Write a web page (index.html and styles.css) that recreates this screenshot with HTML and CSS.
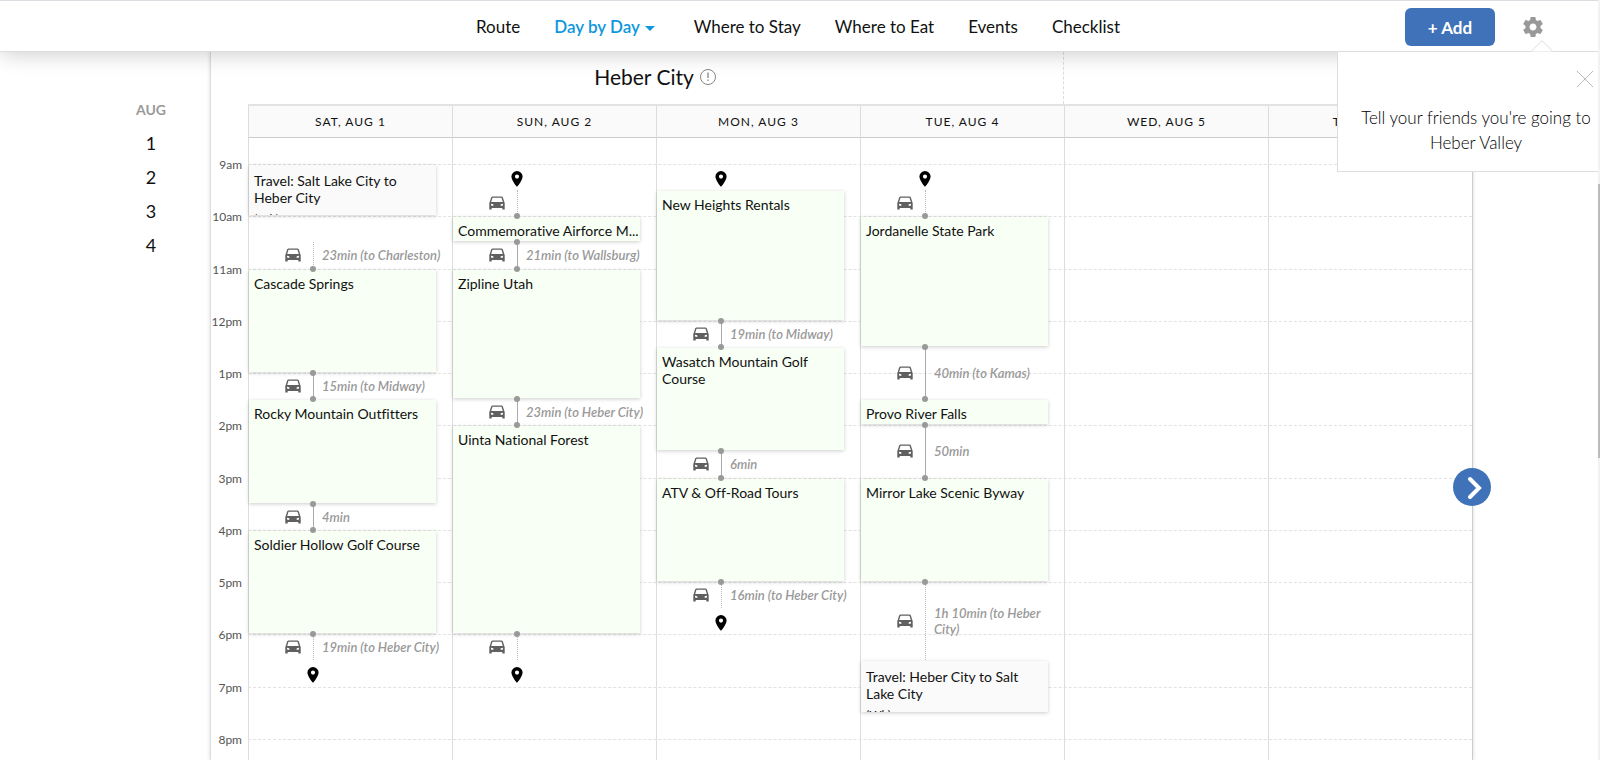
FILE: index.html
```html
<!DOCTYPE html>
<html lang="en">
<head>
  <meta charset="UTF-8">
  <title>Heber City - Day by Day</title>
  <meta name="viewport" content="width=device-width, initial-scale=1.0">
  <link rel="stylesheet" href="styles.css">
</head>
<body>

  <!-- Shared icons -->
  <svg class="sprite" aria-hidden="true">
    <symbol id="car" viewBox="0 0 16 14">
      <path fill-rule="evenodd" d="M3.2 0.5h9.6l1 .7L15.3 6l.4 1v6.6h-2.4v-1.7H2.7v1.7H.3V7l.4-1L2.2 1.2zM3.5 1.7 2.2 5.9h11.6l-1.3-4.2zM2 7.8v1.7l2.3.4V8.3zM14 7.8l-2.3.5v1.6l2.3-.4z"/>
    </symbol>
    <symbol id="pin" viewBox="0 0 12 16">
      <path fill-rule="evenodd" d="M6 0a5.6 5.6 0 0 1 5.6 5.6C11.6 9.5 6 16 6 16S.4 9.5.4 5.6A5.6 5.6 0 0 1 6 0zm0 3.5a2.1 2.1 0 1 0 0 4.2 2.1 2.1 0 0 0 0-4.2z"/>
    </symbol>
  </svg>

  <header class="topbar">
    <nav class="menu">
      <a href="#">Route</a>
      <a href="#" class="active">Day by Day <span class="caret"></span></a>
      <a href="#">Where to Stay</a>
      <a href="#">Where to Eat</a>
      <a href="#">Events</a>
      <a href="#">Checklist</a>
    </nav>
    <div class="actions">
      <button class="add">+ Add</button>
      <button class="gear" aria-label="Settings">
        <svg width="24" height="24" viewBox="0 0 24 24"><path fill="#999" d="M19.43 12.98c.04-.32.07-.64.07-.98s-.03-.66-.07-.98l2.11-1.65c.19-.15.24-.42.12-.64l-2-3.46c-.12-.22-.39-.3-.61-.22l-2.49 1c-.52-.4-1.08-.73-1.69-.98l-.38-2.65C14.46 2.18 14.25 2 14 2h-4c-.25 0-.46.18-.49.42l-.38 2.65c-.61.25-1.17.59-1.69.98l-2.49-1c-.23-.09-.49 0-.61.22l-2 3.46c-.13.22-.07.49.12.64l2.11 1.65c-.04.32-.07.65-.07.98s.03.66.07.98l-2.11 1.65c-.19.15-.24.42-.12.64l2 3.46c.12.22.39.3.61.22l2.49-1c.52.4 1.08.73 1.69.98l.38 2.65c.03.24.24.42.49.42h4c.25 0 .46-.18.49-.42l.38-2.65c.61-.25 1.17-.59 1.69-.98l2.49 1c.23.09.49 0 .61-.22l2-3.46c.12-.22.07-.49-.12-.64l-2.11-1.65zM12 15.5c-1.93 0-3.5-1.57-3.5-3.5s1.57-3.5 3.5-3.5 3.5 1.57 3.5 3.5-1.57 3.5-3.5 3.5z"/></svg>
      </button>
    </div>
    <div class="share">
      <svg class="share-arrow" width="22" height="12" viewBox="0 0 22 12"><path d="M0 11.5 11 .7 22 11.5" fill="#fff" stroke="#ddd"/></svg>
      <button class="close" aria-label="Close">
        <svg width="18" height="18" viewBox="0 0 18 18"><path d="M1 1l16 16M17 1 1 17" stroke="#bbb" fill="none"/></svg>
      </button>
      <p>Tell your friends you're going to Heber Valley</p>
    </div>
  </header>

  <main class="page">
    <aside class="dates">
      <h3>AUG</h3>
      <a href="#d1">1</a>
      <a href="#d2">2</a>
      <a href="#d3">3</a>
      <a href="#d4">4</a>
    </aside>

    <section class="calendar">
      <div class="cities">
        <h2 class="city">Heber City
          <svg width="18" height="18" viewBox="0 0 18 18"><circle cx="9" cy="9" r="7.5" fill="none" stroke="#888"/><path d="M9 4.5v5.5M9 11.5v1.5" stroke="#888" stroke-width="1.3"/></svg>
        </h2>
      </div>

      <div class="day-names">
        <div>SAT, AUG 1</div>
        <div>SUN, AUG 2</div>
        <div>MON, AUG 3</div>
        <div>TUE, AUG 4</div>
        <div>WED, AUG 5</div>
        <div>THU, AUG 6</div>
      </div>

      <div class="board">
        <div class="hours">
          <span>9am</span><span>10am</span><span>11am</span><span>12pm</span>
          <span>1pm</span><span>2pm</span><span>3pm</span><span>4pm</span>
          <span>5pm</span><span>6pm</span><span>7pm</span><span>8pm</span>
        </div>
        <div class="lines">
          <i></i><i></i><i></i><i></i><i></i><i></i><i></i><i></i><i></i><i></i><i></i><i></i>
        </div>

        <div class="days">
          <div class="day" id="d1">
            <div class="event travel" style="grid-row: 1 / span 2">Travel: Salt Lake City to Heber City <small>(Wk)</small></div>
            <div class="trip dotted end" style="grid-row: 4 / span 1"><svg><use href="#car"/></svg><b></b><em>23min (to Charleston)</em></div>
            <div class="event" style="grid-row: 5 / span 4">Cascade Springs</div>
            <div class="trip start end" style="grid-row: 9 / span 1"><svg><use href="#car"/></svg><b></b><em>15min (to Midway)</em></div>
            <div class="event" style="grid-row: 10 / span 4">Rocky Mountain Outfitters</div>
            <div class="trip start end" style="grid-row: 14 / span 1"><svg><use href="#car"/></svg><b></b><em>4min</em></div>
            <div class="event" style="grid-row: 15 / span 4">Soldier Hollow Golf Course</div>
            <div class="trip dotted start" style="grid-row: 19 / span 1"><svg><use href="#car"/></svg><b></b><em>19min (to Heber City)</em></div>
            <div class="place" style="grid-row: 20"><svg><use href="#pin"/></svg></div>
          </div>

          <div class="day" id="d2">
            <div class="place" style="grid-row: 1"><svg><use href="#pin"/></svg></div>
            <div class="trip dotted end" style="grid-row: 2 / span 1"><svg><use href="#car"/></svg><b></b></div>
            <div class="event short" style="grid-row: 3 / span 1">Commemorative Airforce M...</div>
            <div class="trip start end" style="grid-row: 4 / span 1"><svg><use href="#car"/></svg><b></b><em>21min (to Wallsburg)</em></div>
            <div class="event" style="grid-row: 5 / span 5">Zipline Utah</div>
            <div class="trip start end" style="grid-row: 10 / span 1"><svg><use href="#car"/></svg><b></b><em>23min (to Heber City)</em></div>
            <div class="event" style="grid-row: 11 / span 8">Uinta National Forest</div>
            <div class="trip dotted start" style="grid-row: 19 / span 1"><svg><use href="#car"/></svg><b></b></div>
            <div class="place" style="grid-row: 20"><svg><use href="#pin"/></svg></div>
          </div>

          <div class="day" id="d3">
            <div class="place" style="grid-row: 1"><svg><use href="#pin"/></svg></div>
            <div class="event" style="grid-row: 2 / span 5">New Heights Rentals</div>
            <div class="trip start end" style="grid-row: 7 / span 1"><svg><use href="#car"/></svg><b></b><em>19min (to Midway)</em></div>
            <div class="event" style="grid-row: 8 / span 4">Wasatch Mountain Golf Course</div>
            <div class="trip start end" style="grid-row: 12 / span 1"><svg><use href="#car"/></svg><b></b><em>6min</em></div>
            <div class="event" style="grid-row: 13 / span 4">ATV &amp; Off-Road Tours</div>
            <div class="trip dotted start" style="grid-row: 17 / span 1"><svg><use href="#car"/></svg><b></b><em>16min (to Heber City)</em></div>
            <div class="place" style="grid-row: 18"><svg><use href="#pin"/></svg></div>
          </div>

          <div class="day" id="d4">
            <div class="place" style="grid-row: 1"><svg><use href="#pin"/></svg></div>
            <div class="trip dotted end" style="grid-row: 2 / span 1"><svg><use href="#car"/></svg><b></b></div>
            <div class="event" style="grid-row: 3 / span 5">Jordanelle State Park</div>
            <div class="trip start end" style="grid-row: 8 / span 2"><svg><use href="#car"/></svg><b></b><em>40min (to Kamas)</em></div>
            <div class="event short" style="grid-row: 10 / span 1">Provo River Falls</div>
            <div class="trip start end" style="grid-row: 11 / span 2"><svg><use href="#car"/></svg><b></b><em>50min</em></div>
            <div class="event" style="grid-row: 13 / span 4">Mirror Lake Scenic Byway</div>
            <div class="trip dotted start" style="grid-row: 17 / span 3"><svg><use href="#car"/></svg><b></b><em>1h 10min (to Heber City)</em></div>
            <div class="event travel" style="grid-row: 20 / span 2">Travel: Heber City to Salt Lake City <small>(Wk)</small></div>
          </div>

          <div class="day"></div>
          <div class="day"></div>
        </div>
      </div>

      <button class="next" aria-label="Next days">
        <svg width="38" height="38" viewBox="0 0 38 38"><path d="M17 11l9 9-9 9" fill="none" stroke="#fff" stroke-width="4" stroke-linecap="round"/></svg>
      </button>
    </section>
  </main>

  <div class="scrollbar"></div>

</body>
</html>
```

FILE: styles.css
```css
* { box-sizing: border-box; margin: 0; padding: 0; }

body {
  font-family: Lato, sans-serif;
  font-variant-ligatures: none;
  background: #fff;
  color: #111;
  height: 100vh;
  overflow: hidden;
  display: flex;
  flex-direction: column;
}

a { color: inherit; text-decoration: none; }

button {
  font-family: inherit;
  border: none;
  background: none;
  cursor: pointer;
}

svg { display: block; }

.sprite { position: absolute; width: 0; height: 0; }

/* Top bar */
.topbar {
  position: relative;
  z-index: 5;
  flex: none;
  height: 52px;
  display: flex;
  align-items: center;
  justify-content: center;
  background: #fff;
  border-top: 1px solid #dcdde2;
  border-bottom: 1px solid #ddd;
  box-shadow: 0 2px 22px rgba(0, 0, 0, 0.2);
}

.menu {
  display: flex;
  gap: 34px;
  padding-right: 4px;
  font-size: 17px;
}

.menu .active {
  color: #0e97dd;
  font-weight: 600;
  margin-right: 5px;
}

.caret {
  display: inline-block;
  vertical-align: middle;
  margin-left: 1px;
  border: 5px solid transparent;
  border-top-color: #0e97dd;
  border-bottom: none;
}

.actions {
  position: absolute;
  top: 7px;
  right: 55px;
  display: flex;
  align-items: center;
  gap: 26px;
}

.add {
  width: 90px;
  height: 38px;
  border-radius: 6px;
  background: #3f72b8;
  color: #fff;
  font-size: 17px;
  font-weight: bold;
}

/* Share tooltip */
.share {
  position: absolute;
  top: 50px;
  right: 2px;
  width: 261px;
  height: 121px;
  padding: 53px 0 0 16px;
  background: #fff;
  border: 1px solid #ddd;
  border-right: none;
  text-align: center;
  font-size: 17px;
  line-height: 25px;
  font-weight: 300;
  color: #000;
}

.share-arrow { position: absolute; top: -12px; left: 193px; }

.close { position: absolute; top: 18px; right: 4px; }

/* Side dates */
.page {
  flex: 1;
  min-height: 0;
  display: flex;
  padding-right: 127px;
}

.dates {
  width: 210px;
  padding: 48px 0 0 92px;
  display: flex;
  flex-direction: column;
  align-items: center;
  font-size: 18px;
  line-height: 34px;
}

.dates h3 {
  font-size: 14px;
  line-height: 20px;
  color: #999;
  margin-bottom: 6px;
}

/* Calendar */
.calendar {
  position: relative;
  flex: 1;
  border-left: 1px solid #ddd;
  border-right: 1px solid #ccc;
  box-shadow: 0 0 4px rgba(0, 0, 0, 0.15);
}

.cities {
  height: 52px;
  padding-left: 37px;
  display: grid;
  grid-template-columns: 2fr 1fr;
}

.city {
  display: flex;
  justify-content: center;
  align-items: center;
  gap: 5px;
  padding-bottom: 3px;
  font-size: 21px;
  font-weight: normal;
  border-right: 1px dashed #ddd;
}

.day-names {
  display: grid;
  grid-template-columns: repeat(6, 1fr);
  height: 34px;
  margin-left: 37px;
  background: #fafafa;
  border-top: 2px solid #e2e2e2;
  border-bottom: 1px solid #ccc;
  font-size: 12px;
  letter-spacing: 1px;
  line-height: 32px;
  text-align: center;
}

.day-names div { border-left: 1px solid #ddd; }

.board {
  display: grid;
  grid-template-columns: 37px 1fr;
}

.hours, .lines {
  display: grid;
  grid-template-rows: repeat(12, 1fr);
  height: 627px;
  margin-top: 26px;
}

.hours {
  grid-area: 1 / 1;
  font-size: 12px;
  line-height: 16px;
  color: #555;
  text-align: right;
  padding-right: 6px;
}

.hours span { margin-top: -7px; }

.lines { grid-area: 1 / 2; }

.lines i { border-top: 1px dashed #e2e2e2; }

.days {
  grid-area: 1 / 2;
  display: grid;
  grid-template-columns: repeat(6, 1fr);
}

.day {
  display: grid;
  grid-template-rows: repeat(24, minmax(0, 1fr));
  height: 653px;
  padding-top: 26px;
  border-left: 1px solid #ddd;
  min-width: 0;
}

.event {
  margin: 1px 16px 1px 0;
  padding: 5px 4px 0 5px;
  overflow: hidden;
  background: #f8fff4;
  box-shadow: 0 1px 4px rgba(0, 0, 0, 0.2);
  font-size: 14px;
  line-height: 17px;
}

.event.travel {
  padding-top: 7px;
  background: #fafafa;
}

.event small {
  display: block;
  margin-top: 4px;
  font-size: 12px;
}

.event.short {
  padding-right: 0;
  white-space: nowrap;
}

/* Travel time between events */
.trip {
  position: relative;
  z-index: 1;
  display: grid;
  grid-template-columns: 64px 1px 1fr;
  align-items: center;
}

.trip svg {
  width: 16px;
  height: 14px;
  margin-left: 36px;
  fill: #606060;
}

.trip b {
  position: relative;
  align-self: stretch;
  border-left: 1px solid #aaa;
}

.trip.dotted b { border-left: 1px dotted #bbb; }

.trip.start b::before, .trip.end b::after {
  content: "";
  position: absolute;
  left: -4px;
  width: 6px;
  height: 6px;
  border-radius: 3px;
  background: #999;
}

.trip.start b::before { top: -3px; }
.trip.end b::after { bottom: -3px; }

.trip em {
  padding-left: 8px;
  padding-right: 8px;
  font-size: 13px;
  font-weight: 600;
  line-height: 16px;
  color: #999;
}

.place { padding: 7px 0 0 58px; }

.place svg { width: 12px; height: 16px; }

.next {
  position: absolute;
  top: 416px;
  right: -19px;
  width: 38px;
  height: 38px;
  border-radius: 50%;
  background: #3f72b8;
}

.scrollbar {
  position: absolute;
  z-index: 6;
  top: 0;
  right: 0;
  width: 2px;
  height: 100%;
  background: linear-gradient(#f2f2f2 184px, #bbb 184px, #bbb 458px, #f2f2f2 458px);
}
```
